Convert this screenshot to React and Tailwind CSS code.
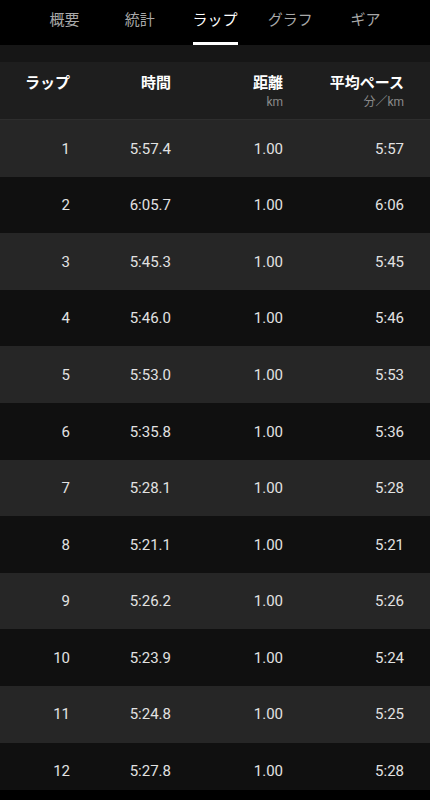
import React from 'react';

const TABS = ['概要', '統計', 'ラップ', 'グラフ', 'ギア'];

const LAPS = [
  ['1', '5:57.4', '1.00', '5:57'],
  ['2', '6:05.7', '1.00', '6:06'],
  ['3', '5:45.3', '1.00', '5:45'],
  ['4', '5:46.0', '1.00', '5:46'],
  ['5', '5:53.0', '1.00', '5:53'],
  ['6', '5:35.8', '1.00', '5:36'],
  ['7', '5:28.1', '1.00', '5:28'],
  ['8', '5:21.1', '1.00', '5:21'],
  ['9', '5:26.2', '1.00', '5:26'],
  ['10', '5:23.9', '1.00', '5:24'],
  ['11', '5:24.8', '1.00', '5:25'],
  ['12', '5:27.8', '1.00', '5:28'],
];

const App = () => {
  return (
    <div
      className="relative h-[800px] w-[430px] overflow-hidden bg-black"
      style={{ fontFamily: 'Roboto, "Noto Sans CJK JP", sans-serif' }}
    >
      {/* Tabs */}
      <div className="flex h-[45px] bg-black px-[27px]">
        {TABS.map((tab) => (
          <div key={tab} className="flex flex-1 justify-center">
            <div className="flex flex-col items-stretch justify-between">
              <span
                className={`pt-[9px] text-[15px] leading-[22px] ${
                  tab === 'ラップ' ? 'text-white' : 'text-[#a8a8a8]'
                }`}
              >
                {tab}
              </span>
              {tab === 'ラップ' && <div className="h-[3px] bg-white" />}
            </div>
          </div>
        ))}
      </div>

      <div className="h-[17px] bg-[#161616]" />

      {/* Header */}
      <div className="flex h-[58px] border-b border-[#2e2e2e] bg-[#1e1e1e] pt-[10px] text-white">
        <div className="w-[70px] text-right text-[15px] font-bold leading-[22px]">ラップ</div>
        <div className="w-[101px] text-right text-[15px] font-bold leading-[22px]">時間</div>
        <div className="flex w-[112px] flex-col items-end">
          <span className="text-[15px] font-bold leading-[22px]">距離</span>
          <span className="text-[12px] leading-[16px] text-[#8a8a8a]">km</span>
        </div>
        <div className="flex w-[121px] flex-col items-end">
          <span className="text-[15px] font-bold leading-[22px]">平均ペース</span>
          <span className="text-[12px] leading-[16px] text-[#8a8a8a]">分／km</span>
        </div>
      </div>

      {/* Lap rows */}
      {LAPS.map((lap, i) => (
        <div
          key={lap[0]}
          className={`flex h-[56.6px] items-center pt-px text-[15px] text-[#e2e2e2] ${
            i % 2 === 0 ? 'bg-[#262626]' : 'bg-[#101010]'
          }`}
        >
          <div className="w-[70px] text-right">{lap[0]}</div>
          <div className="w-[101px] text-right">{lap[1]}</div>
          <div className="w-[112px] text-right">{lap[2]}</div>
          <div className="w-[121px] text-right">{lap[3]}</div>
        </div>
      ))}

      {/* bottom edge bar */}
      <div className="absolute bottom-0 left-0 h-[10px] w-full bg-black" />
    </div>
  );
};

export default App;
